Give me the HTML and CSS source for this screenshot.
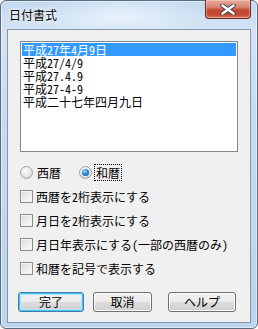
FILE: index.html
```html
<!DOCTYPE html>
<html lang="ja">
<head>
  <meta charset="UTF-8">
  <title>日付書式</title>
  <link rel="stylesheet" href="styles.css">
</head>
<body>

  <div class="window">
    <div class="titlebar">
      <span class="title">日付書式</span>
      <span class="close">
        <svg width="16" height="11" viewBox="0 0 16 11">
          <path d="M2.5 1.5 L13.5 9.5 M13.5 1.5 L2.5 9.5" stroke="#3a3f47" stroke-width="4.4" stroke-linecap="round"/>
          <path d="M2.5 1.5 L13.5 9.5 M13.5 1.5 L2.5 9.5" stroke="#ffffff" stroke-width="2.6" stroke-linecap="round"/>
        </svg>
      </span>
    </div>

    <div class="client">
      <ul class="list">
        <li class="sel">平成27年4月9日</li>
        <li>平成27/4/9</li>
        <li>平成27.4.9</li>
        <li>平成27-4-9</li>
        <li>平成二十七年四月九日</li>
      </ul>

      <div class="radios">
        <label class="opt"><span class="radio"></span>西暦</label>
        <label class="opt"><span class="radio on"></span><span class="focus">和暦</span></label>
      </div>

      <div class="checks">
        <label class="opt"><span class="check"></span>西暦を2桁表示にする</label>
        <label class="opt"><span class="check"></span>月日を2桁表示にする</label>
        <label class="opt"><span class="check"></span>月日年表示にする(一部の西暦のみ)</label>
        <label class="opt"><span class="check"></span>和暦を記号で表示する</label>
      </div>

      <div class="buttons">
        <button class="btn default b1">完了</button>
        <button class="btn b2">取消</button>
        <button class="btn b3">ヘルプ</button>
      </div>
    </div>
  </div>

</body>
</html>
```

FILE: styles.css
```css
body {
  margin: 0;
  background: #ffffff;
  font-family: "Noto Sans CJK JP", "DejaVu Sans", sans-serif;
  font-size: 12px;
  color: #000;
}
.window {
  width: 258px;
  height: 329px;
  box-sizing: border-box;
  border: 1px solid #5b6a7c;
  border-radius: 6px;
  padding: 0 6px 5px 6px;
  display: flex;
  flex-direction: column;
  background: linear-gradient(to bottom, #c3d9f0 0, #d3e3f4 30px, #c6dbf1 120px, #bcd4ee 100%);
  box-shadow: inset 0 0 0 1px rgba(255, 255, 255, 0.55);
}
.titlebar {
  height: 28px;
  display: flex;
  justify-content: space-between;
  align-items: flex-start;
  background: radial-gradient(ellipse 90px 22px at 120px 16px, rgba(235, 244, 252, 0.9), rgba(235, 244, 252, 0));
  margin: 0 -6px;
  padding: 0 6px;
}
.title {
  margin: 6px 0 0 2px;
  line-height: 16px;
  font-size: 12px;
  text-shadow: 0 0 6px #ffffff, 0 0 3px #ffffff;
}
.close {
  margin-top: -1px;
  width: 46px;
  height: 19px;
  box-sizing: border-box;
  border: 1px solid #6b2a22;
  border-top: none;
  border-radius: 0 0 4px 4px;
  background: linear-gradient(to bottom, #e7ab9c 0, #d98572 40%, #c44a34 55%, #c3462f 80%, #dc7a62 100%);
  box-shadow: inset 0 0 0 1px rgba(255, 220, 210, 0.45);
  display: flex;
  align-items: center;
  justify-content: center;
}
.client {
  flex: 1;
  border: 1px solid #8497b0;
  background: #f0f0f0;
  padding: 11px 12px 0 12px;
  display: flex;
  flex-direction: column;
  font-feature-settings: "hwid";
}
.list {
  list-style: none;
  margin: 0;
  width: 218px;
  height: 111px;
  box-sizing: border-box;
  border: 1px solid #828790;
  background: #ffffff;
  padding: 1px;
}
.list li {
  height: 13px;
  line-height: 13px;
  padding-left: 1px;
  white-space: nowrap;
}
.list li.sel {
  background: #3399ff;
  color: #ffffff;
}
.opt {
  display: flex;
  align-items: center;
  height: 13px;
  line-height: 13px;
  white-space: nowrap;
}
.radios {
  display: flex;
  gap: 18px;
  margin-top: 14px;
}
.radio {
  width: 11px;
  height: 11px;
  border-radius: 50%;
  border: 1px solid #a3a3a3;
  background: radial-gradient(circle at 40% 35%, #ffffff 0, #e6e6e6 50%, #cfcfcf 100%);
  margin-right: 4px;
  position: relative;
}
.radio.on::after {
  content: "";
  position: absolute;
  left: 2px;
  top: 2px;
  width: 7px;
  height: 7px;
  border-radius: 50%;
  background: radial-gradient(circle at 40% 35%, #9adcf8 0, #2a8ad4 45%, #11437e 100%);
}
.focus {
  outline: 1px dotted #000;
  outline-offset: 1px;
}
.checks {
  display: flex;
  flex-direction: column;
  gap: 11px;
  margin-top: 11px;
}
.check {
  width: 11px;
  height: 11px;
  border: 1px solid #8f8f8f;
  background: linear-gradient(135deg, #d9d9d9 0, #f2f2f2 70%, #ffffff 100%);
  box-shadow: inset 0 0 0 1px #f4f4f4;
  margin-right: 3px;
}
.buttons {
  display: flex;
  margin: 17px 0 0 -2px;
}
.btn {
  height: 20px;
  box-sizing: border-box;
  padding: 0;
  border: 1px solid #707070;
  border-radius: 3px;
  background: linear-gradient(to bottom, #f2f2f2 0, #ebebeb 48%, #dddddd 52%, #cfcfcf 100%);
  box-shadow: inset 0 0 0 1px #fbfbfb;
  font-family: "Noto Sans CJK JP", "DejaVu Sans", sans-serif;
  font-size: 12px;
  line-height: 16px;
  color: #000;
}
.btn.default {
  border-color: #3c7fb1;
  box-shadow: inset 0 0 0 1px #48c4f2, inset 0 0 0 2px #b4e6f8;
}
.b1 {
  width: 66px;
}
.b2 {
  width: 59px;
  margin-left: 9px;
}
.b3 {
  width: 68px;
  margin-left: 16px;
}
```
